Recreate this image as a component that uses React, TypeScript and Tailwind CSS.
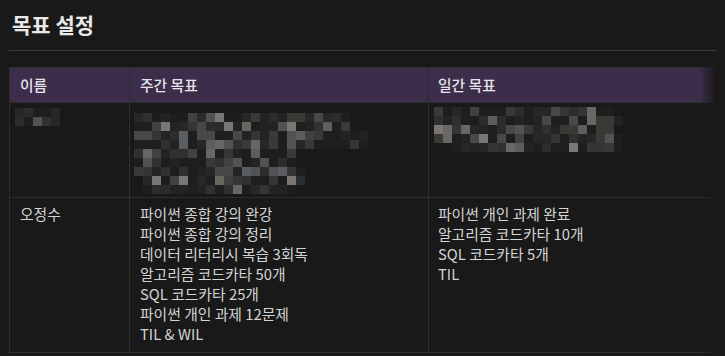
import React from 'react';

// pixelated (redacted) blocks
type Row = [number, number];

const shades = ['#1e1e1e', '#222324', '#272727', '#2b2c2d', '#303030', '#353537', '#3b3936', '#414141', '#4a4847', '#525252', '#5b5e60', '#6a6763', '#7a7674'];

function seeded(seed: number) {
  let s = seed;
  return () => {
    s = (s * 9301 + 49297) % 233280;
    return s / 233280;
  };
}

function Mosaic({ rows, seed, cell = 9 }: { rows: Row[]; seed: number; cell?: number }) {
  const rnd = seeded(seed);
  return (
    <div className="flex flex-col">
      {rows.map(([offset, count], i) => (
        <div key={i} className="flex" style={{ paddingLeft: offset * cell }}>
          {Array.from({ length: count }).map((_, j) => {
            const r = rnd();
            const idx = Math.floor(Math.pow(r, 2.1) * shades.length);
            return <div key={j} style={{ width: cell, height: cell, background: shades[idx] }} />;
          })}
        </div>
      ))}
    </div>
  );
}

const weekly = [
  '파이썬 종합 강의 완강',
  '파이썬 종합 강의 정리',
  '데이터 리터리시 복습 3회독',
  '알고리즘 코드카타 50개',
  'SQL 코드카타 25개',
  '파이썬 개인 과제 12문제',
  'TIL & WIL',
];

const daily = ['파이썬 개인 과제 완료', '알고리즘 코드카타 10개', 'SQL 코드카타 5개', 'TIL'];

export default function App() {
  return (
    <div
      className="min-h-[356px] w-full bg-[#191919] px-[9px] text-[#d4d4d4]"
      style={{ fontFamily: '"Noto Sans CJK KR", "Noto Sans", sans-serif' }}
    >
      <h1 className="ml-[3px] pt-[11px] pb-[13px] text-[21px] leading-[26px] font-bold text-[#e8e8e8]">목표 설정</h1>
      <div className="h-px w-[708px] bg-[#3a3a3a]" />

      <div className="relative mt-[16px] w-[707px] overflow-hidden">
        <div className="w-[760px] border-t border-l border-[#2e2e2e] text-[14.8px] leading-[20px]">
          <div className="flex h-[35px] bg-[#3c2d4a] font-medium text-[#e6e3ea] border-b border-[#2e2e2e]">
            <div className="flex w-[120px] items-center border-r border-[#2b2b2b] pl-[10px]">이름</div>
            <div className="flex w-[299px] items-center border-r border-[#2b2b2b] pl-[10px]">주간 목표</div>
            <div className="flex flex-1 items-center pl-[9px]">일간 목표</div>
          </div>

          <div className="flex h-[95px] border-b border-[#2e2e2e]">
            <div className="w-[120px] border-r border-[#2e2e2e] pt-[5px] pl-[5px]">
              <Mosaic seed={7} rows={[[0, 5], [0, 5]]} />
            </div>
            <div className="w-[299px] border-r border-[#2e2e2e] pt-[10px] pl-[4px]">
              <Mosaic
                seed={31}
                rows={[[0, 24], [0, 24], [0, 26], [0, 26], [0, 18], [0, 18], [0, 19], [1, 18], [1, 17]]}
              />
            </div>
            <div className="flex-1 pt-[4px] pl-[5px]">
              <Mosaic seed={113} rows={[[0, 20], [0, 21], [0, 20], [0, 21], [2, 19]]} />
            </div>
          </div>

          <div className="flex h-[155px] border-b border-[#2e2e2e]">
            <div className="w-[120px] border-r border-[#2e2e2e] pt-[6px] pl-[10px]">오정수</div>
            <div className="w-[299px] border-r border-[#2e2e2e] pt-[6px] pl-[10px]">
              {weekly.map((t) => (
                <div key={t}>{t}</div>
              ))}
            </div>
            <div className="flex-1 pt-[6px] pl-[9px]">
              {daily.map((t) => (
                <div key={t}>{t}</div>
              ))}
            </div>
          </div>
        </div>
        <div className="pointer-events-none absolute inset-y-0 right-0 w-[16px] bg-gradient-to-r from-transparent to-[#191919]" />
      </div>
    </div>
  );
}
